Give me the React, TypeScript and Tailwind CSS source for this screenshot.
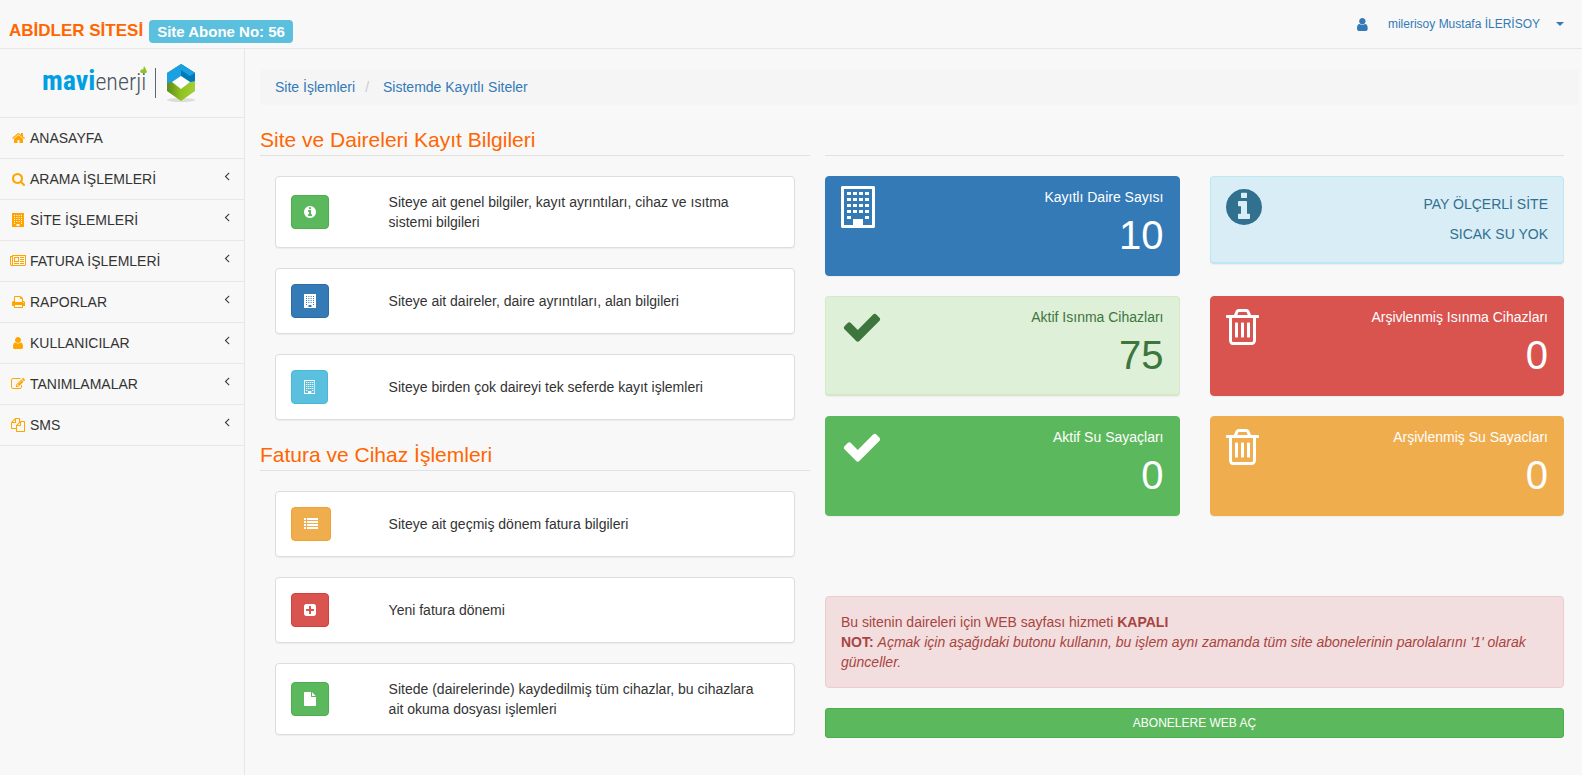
import type { ReactNode } from 'react';
import clsx from 'clsx';

// ============================================================
// ICONS
// ============================================================

type IconShape = { box: string; ratio: string; body: ReactNode };

const ICONS: Record<string, IconShape> = {
  home: {
    box: '64 0 1664 1792',
    ratio: 'aspect-[1664/1792]',
    body: (
      <path d="M1472 992v480q0 26-19 45t-45 19h-384v-384h-256v384h-384q-26 0-45-19t-19-45v-480q0-1 .5-3t.5-3l575-474 575 474q1 2 1 6zm223-69l-62 74q-8 9-21 11h-3q-13 0-21-7l-692-577-692 577q-12 8-24 7-13-2-21-11l-62-74q-8-10-7-23.500t11-21.500l719-599q32-26 76-26t76 26l244 204v-195q0-14 9-23t23-9h192q14 0 23 9t9 23v408l219 182q10 8 11 21.500t-7 23.500z" />
    ),
  },
  search: {
    box: '64 0 1664 1792',
    ratio: 'aspect-[1664/1792]',
    body: (
      <path d="M1216 832q0-185-131.500-316.500t-316.500-131.500-316.500 131.500-131.500 316.500 131.500 316.500 316.500 131.500 316.500-131.500 131.500-316.500zm512 832q0 52-38 90t-90 38q-54 0-90-38l-343-342q-179 124-399 124-143 0-273.500-55.500t-225-150-150-225-55.500-273.500 55.500-273.500 150-225 225-150 273.500-55.500 273.500 55.500 225 150 150 225 55.500 273.500q0 220-124 399l343 343q37 37 37 90z" />
    ),
  },
  building: {
    box: '0 0 12 14',
    ratio: 'aspect-[12/14]',
    body: (
      <path
        fillRule="evenodd"
        d="M0 0h12v14H0zM2 2v1h1V2zM4.330 2v1h1V2zM6.660 2v1h1V2zM9 2v1h1V2zM2 4v1h1V4zM4.330 4v1h1V4zM6.660 4v1h1V4zM9 4v1h1V4zM2 6v1h1V6zM4.330 6v1h1V6zM6.660 6v1h1V6zM9 6v1h1V6zM2 8v1h1V8zM4.330 8v1h1V8zM6.660 8v1h1V8zM9 8v1h1V8zM2 10v1h1v-1zM9 10v1h1v-1zM4.500 11v2h3v-2z"
      />
    ),
  },
  buildingOutline: {
    box: '0 0 34 42',
    ratio: 'aspect-[34/42]',
    body: (
      <path
        fillRule="evenodd"
        d="M1 0h32l1 1v40l-1 1H1l-1-1V1zM3 3v36h9v-6h10v6h9V3zM6 6v3h4V6zM12 6v3h4V6zM18 6v3h4V6zM24 6v3h4V6zM6 12v3h4v-3zM12 12v3h4v-3zM18 12v3h4v-3zM24 12v3h4v-3zM6 18v3h4v-3zM12 18v3h4v-3zM18 18v3h4v-3zM24 18v3h4v-3zM6 24v3h4v-3zM12 24v3h4v-3zM18 24v3h4v-3zM24 24v3h4v-3zM6 30v3h4v-3zM24 30v3h4v-3z"
      />
    ),
  },
  newspaper: {
    box: '0 0 2048 1792',
    ratio: 'aspect-[2048/1792]',
    body: (
      <path d="M1024 512h-384v384h384v-384zm128 640v128h-640v-128h640zm0-768v640h-640v-640h640zm640 768v128h-512v-128h512zm0-256v128h-512v-128h512zm0-256v128h-512v-128h512zm0-256v128h-512v-128h512zm-1536 960v-960h-128v960q0 26 19 45t45 19 45-19 19-45zm1664 0v-1088h-1536v1088q0 33-11 64h1483q26 0 45-19t19-45zm128-1216v1216q0 80-56 136t-136 56h-1664q-80 0-136-56t-56-136v-1088h256v-128h1792z" />
    ),
  },
  print: {
    box: '64 0 1664 1792',
    ratio: 'aspect-[1664/1792]',
    body: (
      <path d="M448 1536h896v-256h-896v256zm0-640h896v-384h-160q-40 0-68-28t-28-68v-160h-640v640zm1152 64q0-26-19-45t-45-19-45 19-19 45 19 45 45 19 45-19 19-45zm128 0v416q0 13-9.500 22.500t-22.500 9.500h-224v160q0 40-28 68t-68 28h-960q-40 0-68-28t-28-68v-160h-224q-13 0-22.500-9.500t-9.500-22.500v-416q0-79 56.500-135.500t135.500-56.500h64v-544q0-40 28-68t68-28h672q40 0 88 20t76 48l152 152q28 28 48 76t20 88v256h64q79 0 135.500 56.500t56.500 135.500z" />
    ),
  },
  user: {
    box: '256 0 1280 1792',
    ratio: 'aspect-[1280/1792]',
    body: (
      <path d="M1536 1399q0 109-62.500 187t-150.500 78h-854q-88 0-150.500-78t-62.500-187q0-85 8.500-160.500t31.500-152 58.500-131 94-89 134.500-34.500q131 128 313 128t313-128q76 0 134.500 34.500t94 89 58.500 131 31.500 152 8.500 160.500zm-256-887q0 159-112.500 271.500t-271.500 112.500-271.500-112.500-112.500-271.500 112.500-271.500 271.500-112.500 271.500 112.500 112.500 271.500z" />
    ),
  },
  edit: {
    box: '0 0 1792 1792',
    ratio: 'aspect-square',
    body: (
      <path d="M888 1184l116-116-152-152-116 116v56h96v96h56zm440-720q-16-16-33 1l-350 350q-17 17-1 33t33-1l350-350q17-17 1-33zm80 594v190q0 119-84.500 203.500t-203.500 84.500h-832q-119 0-203.500-84.500t-84.500-203.500v-832q0-119 84.500-203.500t203.500-84.500h832q63 0 117 25 15 7 18 23 3 17-9 29l-49 49q-14 14-32 8-23-6-45-6h-832q-66 0-113 47t-47 113v832q0 66 47 113t113 47h832q66 0 113-47t47-113v-126q0-13 9-22l64-64q15-15 35-7t20 29zm-96-738l288 288-672 672h-288v-288zm444 132l-92 92-288-288 92-92q28-28 68-28t68 28l152 152q28 28 28 68t-28 68z" />
    ),
  },
  files: {
    box: '0 0 1792 1792',
    ratio: 'aspect-square',
    body: (
      <path d="M1696 384q40 0 68 28t28 68v1216q0 40-28 68t-68 28h-960q-40 0-68-28t-28-68v-288h-544q-40 0-68-28t-28-68v-672q0-40 20-88t48-76l408-408q28-28 76-48t88-20h416q40 0 68 28t28 68v328q68-40 128-40h416zm-544 213l-299 299h299v-299zm-640-384l-299 299h299v-299zm196 647l316-316v-416h-384v416q0 40-28 68t-68 28h-416v640h512v-256q0-40 20-88t48-76zm956 804v-1152h-384v416q0 40-28 68t-68 28h-416v640h896z" />
    ),
  },
  info: {
    box: '128 0 1536 1792',
    ratio: 'aspect-[1536/1792]',
    body: (
      <path d="M1152 1376v-160q0-14-9-23t-23-9h-96v-512q0-14-9-23t-23-9h-320q-14 0-23 9t-9 23v160q0 14 9 23t23 9h96v320h-96q-14 0-23 9t-9 23v160q0 14 9 23t23 9h448q14 0 23-9t9-23zm-128-896v-160q0-14-9-23t-23-9h-192q-14 0-23 9t-9 23v160q0 14 9 23t23 9h192q14 0 23-9t9-23zm640 416q0 209-103 385.500t-279.500 279.500-385.500 103-385.500-103-279.500-279.500-103-385.500 103-385.500 279.500-279.500 385.500-103 385.500 103 279.500 279.500 103 385.500z" />
    ),
  },
  list: {
    box: '0 0 1792 1792',
    ratio: 'aspect-square',
    body: (
      <>
        <path d="M0 128h256v256H0zM0 512h256v256H0zM0 896h256v256H0zM0 1280h256v256H0z" />
        <path d="M384 128h1408v256H384zM384 512h1408v256H384zM384 896h1408v256H384zM384 1280h1408v256H384z" />
      </>
    ),
  },
  plus: {
    box: '128 0 1536 1792',
    ratio: 'aspect-[1536/1792]',
    body: (
      <path d="M1408 960v-128q0-26-19-45t-45-19h-320v-320q0-26-19-45t-45-19h-128q-26 0-45 19t-19 45v320h-320q-26 0-45 19t-19 45v128q0 26 19 45t45 19h320v320q0 26 19 45t45 19h128q26 0 45-19t19-45v-320h320q26 0 45-19t19-45zm256-544v960q0 119-84.500 203.500t-203.500 84.500h-960q-119 0-203.500-84.500t-84.500-203.500v-960q0-119 84.500-203.500t203.500-84.500h960q119 0 203.500 84.500t84.500 203.500z" />
    ),
  },
  file: {
    box: '128 0 1536 1792',
    ratio: 'aspect-[1536/1792]',
    body: (
      <path d="M1152 512v-472q22 14 36 28l408 408q14 14 28 36h-472zm-128 32q0 40 28 68t68 28h544v1056q0 40-28 68t-68 28h-1344q-40 0-68-28t-28-68v-1600q0-40 28-68t68-28h800v544z" />
    ),
  },
  check: {
    box: '0 0 1792 1792',
    ratio: 'aspect-square',
    body: (
      <path d="M1671 566q0 40-28 68l-724 724-136 136q-28 28-68 28t-68-28l-136-136-362-362q-28-28-28-68t28-68l136-136q28-28 68-28t68 28l294 295 656-657q28-28 68-28t68 28l136 136q28 28 28 68z" />
    ),
  },
  trash: {
    box: '192 0 1408 1792',
    ratio: 'aspect-[1408/1792]',
    body: (
      <path d="M704 736v576q0 14-9 23t-23 9h-64q-14 0-23-9t-9-23v-576q0-14 9-23t23-9h64q14 0 23 9t9 23zm256 0v576q0 14-9 23t-23 9h-64q-14 0-23-9t-9-23v-576q0-14 9-23t23-9h64q14 0 23 9t9 23zm256 0v576q0 14-9 23t-23 9h-64q-14 0-23-9t-9-23v-576q0-14 9-23t23-9h64q14 0 23 9t9 23zm128 724v-948h-896v948q0 22 7 40.500t14.500 27 10.500 8.500h832q3 0 10.500-8.500t14.500-27 7-40.500zm-672-1076h448l-48-117q-7-9-17-11h-317q-10 2-17 11zm928 32v64q0 14-9 23t-23 9h-96v948q0 83-47 143.500t-113 60.500h-832q-66 0-113-58.500t-47-141.500v-952h-96q-14 0-23-9t-9-23v-64q0-14 9-23t23-9h309l70-167q15-37 54-63t79-26h320q40 0 79 26t54 63l70 167h309q14 0 23 9t9 23z" />
    ),
  },
  angleLeft: {
    box: '512 0 768 1792',
    ratio: 'aspect-[768/1792]',
    body: (
      <path d="M1203 544q0 13-10 23l-393 393 393 393q10 10 10 23t-10 23l-50 50q-10 10-23 10t-23-10l-466-466q-10-10-10-23t10-23l466-466q10-10 23-10t23 10l50 50q10 10 10 23z" />
    ),
  },
};

function Icon({ name, className = 'h-3.5' }: { name: string; className?: string }) {
  const icon = ICONS[name];
  return (
    <svg viewBox={icon.box} fill="currentColor" aria-hidden="true" className={clsx('shrink-0', icon.ratio, className)}>
      {icon.body}
    </svg>
  );
}

// ============================================================
// DATA
// ============================================================

const MENU = [
  { label: 'ANASAYFA', icon: 'home', expandable: false },
  { label: 'ARAMA İŞLEMLERİ', icon: 'search', expandable: true },
  { label: 'SİTE İŞLEMLERİ', icon: 'building', expandable: true },
  { label: 'FATURA İŞLEMLERİ', icon: 'newspaper', expandable: true },
  { label: 'RAPORLAR', icon: 'print', expandable: true },
  { label: 'KULLANICILAR', icon: 'user', expandable: true },
  { label: 'TANIMLAMALAR', icon: 'edit', expandable: true },
  { label: 'SMS', icon: 'files', expandable: true },
];

type Action = { text: string; icon: string; color: string };

const SITE_ACTIONS: Action[] = [
  {
    text: 'Siteye ait genel bilgiler, kayıt ayrıntıları, cihaz ve ısıtma sistemi bilgileri',
    icon: 'info',
    color: 'bg-[#5cb85c] border-[#4cae4c]',
  },
  {
    text: 'Siteye ait daireler, daire ayrıntıları, alan bilgileri',
    icon: 'building',
    color: 'bg-[#337ab7] border-[#2e6da4]',
  },
  {
    text: 'Siteye birden çok daireyi tek seferde kayıt işlemleri',
    icon: 'buildingOutline',
    color: 'bg-[#5bc0de] border-[#46b8da]',
  },
];

const BILL_ACTIONS: Action[] = [
  {
    text: 'Siteye ait geçmiş dönem fatura bilgileri',
    icon: 'list',
    color: 'bg-[#f0ad4e] border-[#eea236]',
  },
  {
    text: 'Yeni fatura dönemi',
    icon: 'plus',
    color: 'bg-[#d9534f] border-[#d43f3a]',
  },
  {
    text: 'Sitede (dairelerinde) kaydedilmiş tüm cihazlar, bu cihazlara ait okuma dosyası işlemleri',
    icon: 'file',
    color: 'bg-[#5cb85c] border-[#4cae4c]',
  },
];

// ============================================================
// COMPONENTS
// ============================================================

function Logo() {
  return (
    <div className="flex h-[68px] items-center justify-center pr-1">
      <svg viewBox="0 0 154 40" className="h-10" role="img" aria-label="mavienerji">
        <defs>
          <linearGradient id="leaf" x1="0" y1="0" x2="1" y2="0">
            <stop offset="0" stopColor="#5f8a1e" />
            <stop offset="0.5" stopColor="#8fc31f" />
            <stop offset="1" stopColor="#a3cf3a" />
          </linearGradient>
        </defs>
        <text fontFamily="'Roboto Condensed', Roboto, sans-serif" y="27">
          <tspan x="-1" fontSize="28" fontWeight="700" fill="#009fe3">
            mavi
          </tspan>
          <tspan fontSize="24" fontWeight="300" fill="#4a5560">
            enerji
          </tspan>
        </text>
        <path d="M101 3q2 3 3 6l-1 1h-5l-1-2 2-2 1 1z" fill="#8fc31f" />
        <path d="M112.500 5v30" stroke="#5b6670" strokeWidth="1" />
        <ellipse cx="138" cy="37" rx="14" ry="2" fill="#dcdcdc" />
        <path d="M138 1l14 9v18l-14 10-14-10V10z" fill="url(#leaf)" />
        <path d="M138 1l14 9v8l-5 1-9-6-9 6-5 1V10z" fill="#1ba1e2" />
        <path d="M138 1l14 9v8l-5 1-9-6z" fill="#0079b8" />
        <path d="M138 1l14 9-5 3-9-6z" fill="#1ba1e2" />
        <path d="M138 13l9 6-9 7-9-7z" fill="#fff" />
      </svg>
    </div>
  );
}

function SectionTitle({ children }: { children?: ReactNode }) {
  return (
    <h3 className="mb-5 h-[31px] border-b border-[#e2e2e2] text-[21px] leading-[30px] text-[#ff6600]">{children}</h3>
  );
}

function ActionCard({ text, icon, color }: Action) {
  return (
    <div className="flex items-center rounded border border-[#ddd] bg-white p-[15px] shadow-[0_1px_1px_rgba(0,0,0,0.05)]">
      <div className="w-1/5">
        <button
          type="button"
          aria-label={text}
          className={clsx('flex h-[34px] items-center rounded border px-3 text-white', color)}
        >
          <Icon name={icon} />
        </button>
      </div>
      <p className="w-4/5 pr-4">{text}</p>
    </div>
  );
}

function Panel({ icon, className, children }: { icon: string; className: string; children: ReactNode }) {
  return (
    <div
      className={clsx(
        'flex justify-between rounded border px-[15px] pt-[9px] text-right shadow-[0_1px_1px_rgba(0,0,0,0.05)]',
        className,
      )}
    >
      <Icon name={icon} className="h-[42px]" />
      <div>{children}</div>
    </div>
  );
}

function Stat({ icon, label, value, className }: { icon: string; label: string; value: number; className: string }) {
  return (
    <Panel icon={icon} className={className}>
      <div className="leading-[22px]">{label}</div>
      <div className="text-[40px] leading-[54px]">{value}</div>
    </Panel>
  );
}

export default function App() {
  return (
    <div className="flex min-h-screen flex-col bg-[#f8f8f8] font-['Liberation_Sans',Arial,sans-serif] text-sm leading-5 text-[#333]">
      {/* --- TOP BAR --- */}
      <header className="flex h-[49px] items-center justify-between border-b border-[#e7e7e7] pr-[18px] pl-[9px]">
        <div className="flex items-center gap-1.5 pt-3.5">
          <a href="#" className="text-[17px] font-bold text-[#ff6600]">
            ABİDLER SİTESİ
          </a>
          <span className="rounded bg-[#5bc0de] px-2 text-[15px] leading-[23px] font-bold text-white">
            Site Abone No: 56
          </span>
        </div>
        <button type="button" className="flex items-center text-xs text-[#337ab7]">
          <Icon name="user" className="mr-5 h-[15px]" />
          milerisoy Mustafa İLERİSOY
          <svg viewBox="0 0 8 4" fill="currentColor" aria-hidden="true" className="ml-4 h-1 w-2 shrink-0">
            <path d="M0 0h8L4 4z" />
          </svg>
        </button>
      </header>

      <div className="flex flex-1">
        {/* --- SIDEBAR --- */}
        <aside className="w-[245px] shrink-0 border-r border-[#e7e7e7]">
          <Logo />
          <nav>
            <ul className="border-t border-[#e7e7e7]">
              {MENU.map((item) => (
                <li key={item.label} className="border-b border-[#e7e7e7]">
                  <a href="#" className="flex h-10 items-center pr-3.5 pl-[9px]">
                    <span className="mr-[3px] flex w-[18px] shrink-0 justify-center text-[#ffa500]">
                      <Icon name={item.icon} />
                    </span>
                    <span className="flex-1">{item.label}</span>
                    {item.expandable && <Icon name="angleLeft" className="mb-1.5 h-3.5" />}
                  </a>
                </li>
              ))}
            </ul>
          </nav>
        </aside>

        {/* --- CONTENT --- */}
        <main className="min-w-0 flex-1 pt-5 pr-[3px] pl-[15px]">
          <ol className="mb-5 flex rounded bg-[#f5f5f5] px-[15px] py-2 text-[#337ab7]">
            <li>
              <a href="#">Site İşlemleri</a>
            </li>
            <li>
              <span className="px-2.5 text-[#ccc]">/</span>
              <a href="#" className="ml-1">
                Sistemde Kayıtlı Siteler
              </a>
            </li>
          </ol>

          <div className="grid grid-cols-[550fr_739fr] gap-[15px] pr-[15px]">
            <div>
              <SectionTitle>Site ve Daireleri Kayıt Bilgileri</SectionTitle>
              <div className="mb-5 grid gap-5 px-[15px]">
                {SITE_ACTIONS.map((action) => (
                  <ActionCard key={action.text} {...action} />
                ))}
              </div>
              <SectionTitle>Fatura ve Cihaz İşlemleri</SectionTitle>
              <div className="grid gap-5 px-[15px]">
                {BILL_ACTIONS.map((action) => (
                  <ActionCard key={action.text} {...action} />
                ))}
              </div>
            </div>

            <div>
              <SectionTitle />
              <div className="grid grid-cols-2 items-start gap-x-[30px] gap-y-5">
                <Stat
                  icon="buildingOutline"
                  label="Kayıtlı Daire Sayısı"
                  value={10}
                  className="border-[#337ab7] bg-[#337ab7] pb-[13px] text-white"
                />
                <Panel icon="info" className="border-b-2 border-[#bce8f1] bg-[#d9edf7] pb-[13px] text-[#31708f]">
                  <div className="pt-[3px] leading-[30px]">
                    <div>PAY ÖLÇERLİ SİTE</div>
                    <div>SICAK SU YOK</div>
                  </div>
                </Panel>
                <Stat
                  icon="check"
                  label="Aktif Isınma Cihazları"
                  value={75}
                  className="border-b-2 border-[#d6e9c6] bg-[#dff0d8] pb-3 text-[#3c763d]"
                />
                <Stat
                  icon="trash"
                  label="Arşivlenmiş Isınma Cihazları"
                  value={0}
                  className="border-[#d9534f] bg-[#d9534f] pb-[13px] text-white"
                />
                <Stat
                  icon="check"
                  label="Aktif Su Sayaçları"
                  value={0}
                  className="border-[#5cb85c] bg-[#5cb85c] pb-[13px] text-white"
                />
                <Stat
                  icon="trash"
                  label="Arşivlenmiş Su Sayacları"
                  value={0}
                  className="border-[#f0ad4e] bg-[#f0ad4e] pb-[13px] text-white"
                />
              </div>

              <div className="mt-20 mb-5 rounded border border-[#ebccd1] bg-[#f2dede] p-[15px] text-[#a94442]">
                <p>
                  Bu sitenin daireleri için WEB sayfası hizmeti <b>KAPALI</b>
                </p>
                <p>
                  <b>NOT:</b>{' '}
                  <i>
                    Açmak için aşağıdaki butonu kullanın, bu işlem aynı zamanda tüm site abonelerinin parolalarını '1'
                    olarak günceller.
                  </i>
                </p>
              </div>
              <button
                type="button"
                className="h-[30px] w-full rounded-[3px] border border-[#4cae4c] bg-[#5cb85c] text-xs text-white"
              >
                ABONELERE WEB AÇ
              </button>
            </div>
          </div>
        </main>
      </div>
    </div>
  );
}
